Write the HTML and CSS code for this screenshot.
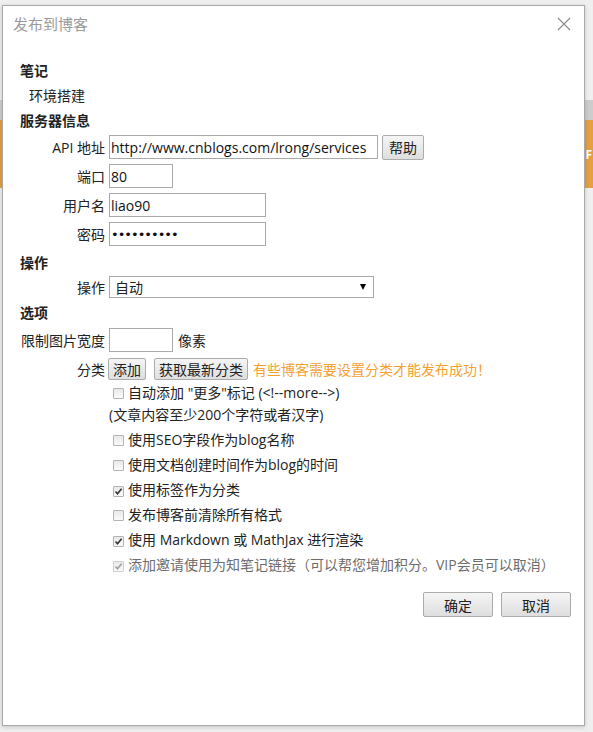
FILE: index.html
```html
<!DOCTYPE html>
<html lang="zh-CN">
<head>
    <meta charset="UTF-8">
    <title>发布到博客</title>
    <link rel="stylesheet" href="styles.css">
</head>
<body>
    <div class="page">
        <div class="page-bar"></div>
        <div class="page-band"><span class="band-text">F</span></div>
    </div>

    <div class="dialog">
        <div class="dialog-head">
            <span class="dialog-title">发布到博客</span>
            <span class="dialog-close">
                <svg width="14" height="14" viewBox="0 0 14 14"><path d="M1 1 L13 13 M13 1 L1 13" stroke="#8a8a8a" stroke-width="1.1" fill="none"/></svg>
            </span>
        </div>

        <div class="dialog-body">
            <div class="section">笔记</div>
            <div class="note-title">环境搭建</div>

            <div class="section">服务器信息</div>
            <div class="fields">
                <div class="field">
                    <label class="field-label">API 地址</label>
                    <input class="text text-url" type="text" value="http://www.cnblogs.com/lrong/services">
                    <button class="btn btn-help">帮助</button>
                </div>
                <div class="field">
                    <label class="field-label">端口</label>
                    <input class="text text-short" type="text" value="80">
                </div>
                <div class="field">
                    <label class="field-label">用户名</label>
                    <input class="text text-mid" type="text" value="liao90">
                </div>
                <div class="field">
                    <label class="field-label">密码</label>
                    <input class="text text-mid text-pass" type="password" value="0123456789">
                </div>
            </div>

            <div class="section section-op">操作</div>
            <div class="field field-select">
                <label class="field-label">操作</label>
                <div class="select">
                    <span>自动</span>
                    <span class="select-arrow"></span>
                </div>
            </div>

            <div class="section section-opt">选项</div>
            <div class="field field-width">
                <label class="field-label">限制图片宽度</label>
                <input class="text text-short" type="text" value="">
                <span class="unit">像素</span>
            </div>
            <div class="field field-cat">
                <label class="field-label">分类</label>
                <button class="btn btn-small">添加</button>
                <button class="btn btn-small">获取最新分类</button>
                <span class="cat-tip">有些博客需要设置分类才能发布成功！</span>
            </div>

            <div class="checks">
                <div class="check">
                    <span class="box"></span>自动添加 "更多"标记 (&lt;!--more--&gt;)<br>(文章内容至少200个字符或者汉字)
                </div>
                <div class="check"><span class="box"></span>使用SEO字段作为blog名称</div>
                <div class="check"><span class="box"></span>使用文档创建时间作为blog的时间</div>
                <div class="check">
                    <span class="box"><svg width="9" height="9" viewBox="0 0 9 9"><path d="M1.5 4.5 L3.5 6.7 L7.6 1.8" stroke="#333" stroke-width="1.6" fill="none"/></svg></span>使用标签作为分类
                </div>
                <div class="check"><span class="box"></span>发布博客前清除所有格式</div>
                <div class="check">
                    <span class="box"><svg width="9" height="9" viewBox="0 0 9 9"><path d="M1.5 4.5 L3.5 6.7 L7.6 1.8" stroke="#333" stroke-width="1.6" fill="none"/></svg></span>使用 Markdown 或 MathJax 进行渲染
                </div>
                <div class="check check-disabled">
                    <span class="box"><svg width="9" height="9" viewBox="0 0 9 9"><path d="M1.5 4.5 L3.5 6.7 L7.6 1.8" stroke="#a0a0a0" stroke-width="1.6" fill="none"/></svg></span>添加邀请使用为知笔记链接（可以帮您增加积分。VIP会员可以取消）
                </div>
            </div>

            <div class="dialog-foot">
                <button class="btn btn-foot">确定</button>
                <button class="btn btn-foot">取消</button>
            </div>
        </div>
    </div>
</body>
</html>
```

FILE: styles.css
```css
body {
    margin: 0;
    background-color: #efefef;
    font-family: "Open Sans", "Noto Sans CJK SC", sans-serif;
    font-size: 14px;
    color: #222;
}

/* page behind the dialog */
.page {
    box-sizing: border-box;
    height: 732px;
    padding-top: 100px;
    overflow: hidden;
}
.page-bar {
    height: 20px;
    background-color: #cdcdcd;
}
.page-band {
    height: 68px;
    background-color: #e4a042;
    display: flex;
    justify-content: flex-end;
    align-items: center;
}
.band-text {
    color: #fff;
    font-size: 12px;
    font-weight: bold;
    padding-right: 1px;
}

/* dialog */
.dialog {
    position: absolute;
    left: 2px;
    top: 5px;
    width: 581px;
    height: 719px;
    background: #fff;
    border: 1px solid #a9a9a9;
    box-shadow: 0 1px 4px rgba(0, 0, 0, 0.18);
}
.dialog-head {
    display: flex;
    justify-content: space-between;
    align-items: center;
    height: 22px;
    padding: 7px 13px 0 10px;
}
.dialog-title {
    font-size: 15px;
    line-height: 22px;
    color: #9b9b9b;
}
.dialog-close {
    display: flex;
}
.dialog-body {
    padding: 23px 13px 0 17px;
}

.section {
    font-weight: bold;
    line-height: 25px;
}
.note-title {
    line-height: 25px;
    padding-left: 9px;
}

.fields {
    display: flex;
    flex-direction: column;
    gap: 5px;
    margin-top: 2px;
}
.field {
    display: flex;
    align-items: center;
    height: 24px;
}
.field-label {
    width: 85px;
    margin-right: 4px;
    text-align: right;
    white-space: nowrap;
}

.text {
    box-sizing: border-box;
    height: 24px;
    padding: 0 1px;
    border: 1px solid #a9a9a9;
    font-family: "Open Sans", "Noto Sans CJK SC", sans-serif;
    font-size: 14px;
    color: #111;
    background: #fff;
    outline: none;
}
.text-url {
    width: 269px;
}
.text-short {
    width: 64px;
}
.text-mid {
    width: 157px;
}
.text-pass {
    font-family: "DejaVu Sans", sans-serif;
    font-size: 13px;
    letter-spacing: -1px;
}

.btn {
    box-sizing: border-box;
    border: 1px solid #acacac;
    border-radius: 2px;
    background: linear-gradient(#f5f5f5, #dedede);
    font-family: "Open Sans", "Noto Sans CJK SC", sans-serif;
    font-size: 14px;
    color: #222;
    padding: 0 4px;
    cursor: pointer;
}
.btn-help {
    height: 25px;
    margin-left: 4px;
    padding: 0 6px;
}

.section-op {
    margin-top: 4px;
}
.field-select {
    height: 22px;
    margin-top: 1px;
}
.select {
    box-sizing: border-box;
    width: 265px;
    height: 22px;
    border: 1px solid #a9a9a9;
    display: flex;
    justify-content: space-between;
    align-items: center;
    padding: 0 7px 0 5px;
}
.select-arrow {
    width: 0;
    height: 0;
    border-left: 3px solid transparent;
    border-right: 3px solid transparent;
    border-top: 6px solid #000;
}

.section-opt {
    margin-top: 2px;
}
.field-width {
    margin-top: 3px;
}
.unit {
    margin-left: 5px;
}

.field-cat {
    height: 22px;
    margin-top: 6px;
}
.field-cat .field-label {
    margin-right: 3px;
}
.btn-small {
    height: 22px;
    margin-right: 8px;
}
.btn-small + .btn-small {
    margin-right: 5px;
}
.cat-tip {
    color: #f5a12f;
}

.checks {
    display: flex;
    flex-direction: column;
    gap: 3px;
    margin-top: 2px;
    padding-left: 89px;
}
.check {
    line-height: 22px;
}
.box {
    display: inline-flex;
    justify-content: center;
    align-items: center;
    box-sizing: border-box;
    width: 11px;
    height: 11px;
    margin: 0 4px 0 4px;
    vertical-align: -1px;
    border: 1px solid #b4b4b4;
    border-radius: 1px;
    background: linear-gradient(#e9e9e9, #fafafa);
}
.check-disabled {
    color: #6d6d6d;
}
.check-disabled .box {
    border-color: #d0d0d0;
}

.dialog-foot {
    display: flex;
    justify-content: flex-end;
    gap: 8px;
    margin-top: 16px;
}
.btn-foot {
    width: 70px;
    height: 25px;
}
```
